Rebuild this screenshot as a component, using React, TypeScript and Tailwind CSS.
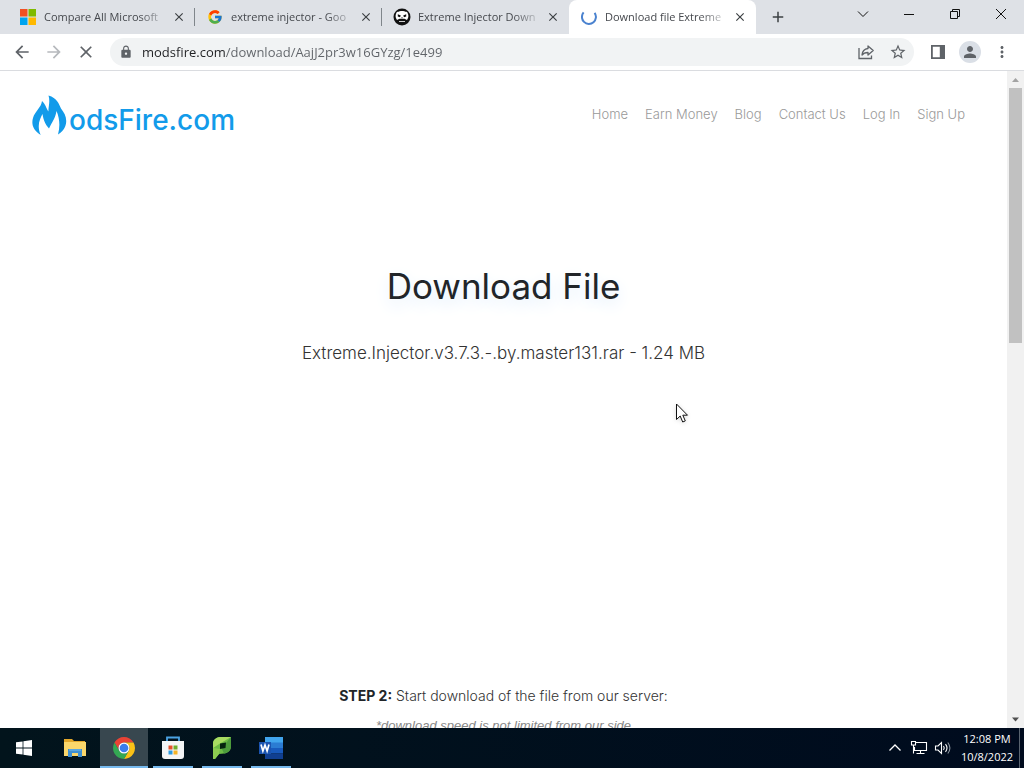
import type { ReactNode } from "react"
import { FcGoogle } from "react-icons/fc"
import {
  MdAdd,
  MdArrowBack,
  MdArrowForward,
  MdClose,
  MdLock,
  MdMoreVert,
  MdPerson,
  MdStarBorder,
} from "react-icons/md"

const navLinks = ["Home", "Earn Money", "Blog", "Contact Us", "Log In", "Sign Up"]

function MicrosoftIcon() {
  return (
    <svg viewBox="0 0 16 16" className="size-4">
      <path fill="#f25022" d="M0 0h7.5v7.5H0z" />
      <path fill="#7fba00" d="M8.5 0H16v7.5H8.5z" />
      <path fill="#00a4ef" d="M0 8.5h7.5V16H0z" />
      <path fill="#ffb900" d="M8.5 8.5H16V16H8.5z" />
    </svg>
  )
}

function PandaIcon() {
  return (
    <svg viewBox="0 0 18 18" className="size-[18px] shrink-0">
      <circle cx="9" cy="9" r="8.5" fill="#111" />
      <path
        fill="#fff"
        d="M2.8 6.500C3.500 4.500 4 3 5 4c2-1.300 6-1.300 8 0 1-1 1.500.5 2.200 2.500.6 2-.2 4-1.200 5.500l-2.500-1.200H6.500L4 12C3 10.500 2.200 8.500 2.800 6.500z"
      />
      <path fill="#111" d="M4.800 6.200l3 1.200-.8 1.800-2.200-.6zM13.200 6.200l-3 1.200.8 1.800 2.200-.6zM8 9.500h2l-1 1z" />
      <path stroke="#fff" strokeWidth=".8" d="M6 13.500h6" />
    </svg>
  )
}

function SpinnerIcon() {
  return (
    <svg viewBox="0 0 16 16" className="size-4" fill="none" stroke="#4a82cf" strokeWidth="2">
      <path d="M2.600 3.400A7 7 0 1 0 13.600 3.800" />
    </svg>
  )
}

function ShareIcon() {
  return (
    <svg viewBox="0 0 18 18" className="size-[18px]" fill="none" stroke="#5f6368" strokeWidth="1.300">
      <path d="M2 5v10.500h12.500v-3" />
      <path strokeLinejoin="round" d="M11 3l5.200 4.500L11 12V9.500c-2.800 0-4.600.7-6 2.600.3-3.600 2.400-6.200 6-6.600z" />
    </svg>
  )
}

function SidePanelIcon() {
  return (
    <svg viewBox="0 0 16 16" className="size-4">
      <path fill="#5f6368" fillRule="evenodd" d="M1 1h14v14H1zM2.800 2.800v10.400h7V2.800z" />
    </svg>
  )
}

function FlameMark() {
  return (
    <svg viewBox="0 0 36 42" className="h-[42px] w-9">
      <path
        fill="#129bea"
        d="M8.700 40C1 35-.8 29 1 23 3 16 9 13 10 6c3.500 3 4 7 6.500 10.500C16 12 18.500 7 16.500.500 25 3 27 9 29 13.500c3.500 4.500 6 9 5 15-.8 5-4 8.500-8 11 2.200-8 1.700-16-1.500-23.500-1 7-4.500 11-7.500 17.500C13 29 11.500 25 10.500 19 8 24 4.500 30 8.700 40z"
      />
    </svg>
  )
}

function WindowsIcon() {
  return (
    <svg viewBox="0 0 16 16" className="size-4" fill="#fff">
      <path d="M0 2.300l6.600-.9v6.200H0zM7.400 1.300L16 0v7.600H7.400zM0 8.400h6.600v6.200L0 13.700zM7.400 8.400H16V16l-8.600-1.300z" />
    </svg>
  )
}

function ExplorerIcon() {
  return (
    <svg viewBox="0 0 22 20" className="h-5 w-[22px]">
      <path fill="#e3a82b" d="M0 1h8l2 2h11v4H0z" />
      <path fill="#fbd76b" d="M0 4h22v14H0z" />
      <path fill="#3f8fd0" d="M4 11h14v8h-4v-4H8v4H4z" />
      <path fill="#5aa6de" d="M5 11h12v2H5z" />
    </svg>
  )
}

function ChromeIcon() {
  return (
    <svg viewBox="2 2 44 44" className="size-[22px]">
      <path fill="#ea4335" d="M24 13h19.050A22 22 0 0 0 4.950 13l9.520 16.500A11 11 0 0 1 24 13z" />
      <path fill="#fbc116" d="M33.530 29.500L24 46A22 22 0 0 0 43.050 13H24a11 11 0 0 1 9.530 16.500z" />
      <path fill="#34a853" d="M14.470 29.500L4.950 13A22 22 0 0 0 24 46l9.530-16.500a11 11 0 0 1-19.060 0z" />
      <circle cx="24" cy="24" r="11" fill="#fff" />
      <circle cx="24" cy="24" r="8.700" fill="#3b7ded" />
    </svg>
  )
}

function StoreIcon() {
  return (
    <svg viewBox="0 0 24 24" className="size-6">
      <path fill="none" stroke="#4ba3e3" strokeWidth="1.800" d="M6 6V1.500h12V6" />
      <path fill="#f4f5f6" d="M1 5h22v15a3 3 0 0 1-3 3H4a3 3 0 0 1-3-3z" />
      <path fill="#e6502c" d="M7.500 9.500h4v4h-4z" />
      <path fill="#6fae2e" d="M12.500 9.500h4v4h-4z" />
      <path fill="#2c9be0" d="M7.500 14.500h4v4h-4z" />
      <path fill="#f5b326" d="M12.500 14.500h4v4h-4z" />
    </svg>
  )
}

function LeafIcon() {
  return (
    <svg viewBox="0 0 20 24" className="h-6 w-5">
      <path fill="#6dbb45" d="M1 8c0-4 2.500-6.500 7-7h11v9c0 4.500-3 7-7 7.500L7 18l-4 5H1z" />
      <path fill="#a9dc62" d="M1 8c0-4 2.500-6.500 7-7h11L8 7.500 1 12z" />
      <path fill="#4d9c3c" d="M19 1v9c0 4.500-3 7-7 7.500L10 13l4-6z" />
      <path fill="#8ccb50" d="M1 12l7 1-1 5-4 5H1z" />
      <path fill="#06240f" d="M8 7.500l6-1-.5 5.500L8 13z" />
    </svg>
  )
}

function WordIcon() {
  return (
    <svg viewBox="0 0 24 22" className="h-[22px] w-6">
      <path fill="#41a5ee" d="M6 0h18v6H6z" />
      <path fill="#2b7cd3" d="M6 5.500h18V11H6z" />
      <path fill="#185abd" d="M6 11h18v5.500H6z" />
      <path fill="#103f91" d="M6 16.500h18V22H6z" />
      <path fill="#1b54b0" d="M0 5h12v12H0z" />
      <path fill="none" stroke="#fff" strokeWidth="1.700" d="M2 7.500l1.900 6.500L6 8l2.100 6L10 7.500" />
    </svg>
  )
}

function Tab({ icon, title, active, divider }: { icon: ReactNode; title: string; active?: boolean; divider?: boolean }) {
  return (
    <div
      className={
        "relative flex h-full min-w-0 flex-[0_1_187px] items-center gap-2 pr-2 pl-3 " +
        (active ? "rounded-t-lg bg-white" : "")
      }
    >
      <button className="flex min-w-0 flex-1 items-center gap-2 text-left">
        <span className="flex w-4 shrink-0 justify-center">{icon}</span>
        <span className="flex-1 text-[11px] leading-4 whitespace-nowrap text-[#45484d] [mask-image:linear-gradient(90deg,#000_80%,#0003)]">
          {title}
        </span>
      </button>
      <button aria-label={"Close " + title} className="flex size-4 shrink-0 items-center justify-center text-[#3c4043]">
        <MdClose className="size-[14px]" />
      </button>
      {divider && <span className="absolute top-2 right-0 h-[18px] w-px bg-[#80868b]" />}
    </div>
  )
}

function ToolButton({ label, children }: { label: string; children: ReactNode }) {
  return (
    <button aria-label={label} className="flex h-7 w-8 shrink-0 items-center justify-center text-[#5f6368]">
      {children}
    </button>
  )
}

function WindowButton({ label, d }: { label: string; d: string }) {
  return (
    <button aria-label={label} className="flex h-7 w-[46px] items-center justify-center">
      <svg viewBox="0 0 12 12" className="size-3" fill="none" stroke="#111" strokeWidth="1">
        <path d={d} />
      </svg>
    </button>
  )
}

function TaskButton({ label, running, active, children }: { label: string; running?: boolean; active?: boolean; children: ReactNode }) {
  return (
    <button
      aria-label={label}
      className={"relative flex h-10 w-12 items-center justify-center " + (active ? "bg-[#38474f]" : "")}
    >
      {children}
      {running && <span className={"absolute bottom-0 h-0.5 bg-[#76b9ed] " + (active ? "inset-x-0" : "inset-x-1")} />}
    </button>
  )
}

function Browser() {
  return (
    <header className="shrink-0 font-['Open_Sans',sans-serif]">
      <div className="flex h-[34px] justify-between bg-[#dee1e6]">
        <div className="flex min-w-0 flex-1 items-center pl-2">
          <Tab icon={<MicrosoftIcon />} title="Compare All Microsoft" divider />
          <Tab icon={<FcGoogle className="size-4 shrink-0" />} title="extreme injector - Goo" divider />
          <Tab icon={<PandaIcon />} title="Extreme Injector Down" />
          <Tab icon={<SpinnerIcon />} title="Download file Extreme" active />
          <button aria-label="New tab" className="ml-3 flex size-5 items-center justify-center text-[#3c4043]">
            <MdAdd className="size-[18px]" />
          </button>
        </div>
        <div className="flex">
          <WindowButton label="Search tabs" d="M1 3.500l5 5 5-5" />
          <WindowButton label="Minimize" d="M1 6.500h10" />
          <WindowButton label="Restore" d="M1.500 3.500h7v7h-7zM3.500 3.500v-2h7v7h-2" />
          <WindowButton label="Close" d="M1 1l10 10M11 1L1 11" />
        </div>
      </div>

      <div className="flex h-[37px] items-center gap-2 border-b border-[#dadce0] bg-white px-1.5">
        <div className="flex">
          <ToolButton label="Back"><MdArrowBack className="size-5" /></ToolButton>
          <ToolButton label="Forward"><MdArrowForward className="size-5 text-[#b6b9bd]" /></ToolButton>
          <ToolButton label="Stop"><MdClose className="size-5" /></ToolButton>
        </div>
        <div className="flex h-7 flex-1 items-center rounded-full bg-[#f1f3f4]">
          <ToolButton label="Site information"><MdLock className="size-[14px]" /></ToolButton>
          <input
            aria-label="Address"
            defaultValue="modsfire.com/download/AajJ2pr3w16GYzg/1e499"
            className="min-w-0 flex-1 bg-[linear-gradient(90deg,#202124_84px,#5f6368_84px)] bg-clip-text text-[13px] leading-5 text-transparent outline-none"
          />
          <ToolButton label="Share"><ShareIcon /></ToolButton>
          <ToolButton label="Bookmark"><MdStarBorder className="size-[18px]" /></ToolButton>
        </div>
        <div className="flex">
          <ToolButton label="Side panel"><SidePanelIcon /></ToolButton>
          <ToolButton label="Profile">
            <span className="flex size-[22px] items-center justify-center rounded-full bg-[#dadfe6]">
              <MdPerson className="size-[18px]" />
            </span>
          </ToolButton>
          <ToolButton label="Menu"><MdMoreVert className="size-[18px]" /></ToolButton>
        </div>
      </div>
    </header>
  )
}

function Page() {
  return (
    <main className="min-w-0 flex-1 overflow-hidden bg-white font-['Inter',sans-serif]">
      <div className="flex items-start justify-between py-6 pr-[42px] pl-8">
        <a href="#" className="flex items-end gap-px">
          <FlameMark />
          <span className="text-[28px] leading-[34px] font-medium text-[#129bea]">odsFire.com</span>
        </a>
        <nav className="flex gap-[17px] pt-[9px] text-[13px] leading-5 font-light text-[#999]">
          {navLinks.map((link) => (
            <a key={link} href="#">{link}</a>
          ))}
        </nav>
      </div>

      <div className="flex flex-col items-center pt-[101px] text-center">
        <h1 className="text-[35px] leading-[48px] text-[#212529] [text-shadow:0_6px_16px_#dcebfa]">Download File</h1>
        <p className="pt-[29px] text-[17px] leading-7 font-light text-[#333]">
          Extreme.Injector.v3.7.3.-.by.master131.rar - 1.24 MB
        </p>
        <div className="h-[319px]" />
        <p className="text-[14px] leading-5 font-light text-[#333]">
          <strong className="font-bold text-[#212529]">STEP 2:</strong> Start download of the file from our server:
        </p>
        <p className="pt-[10px] font-['Liberation_Sans',sans-serif] text-[13px] leading-5 text-[#888] italic">
          *download speed is not limited from our side
        </p>
      </div>
    </main>
  )
}

function Scrollbar() {
  return (
    <div className="flex w-[17px] shrink-0 flex-col items-center bg-[#f1f1f1]">
      <svg viewBox="0 0 17 17" className="size-[17px]"><path fill="#a3a3a3" d="M5 11l3.500-4 3.500 4z" /></svg>
      <div className="w-[13px] flex-1">
        <div className="h-[41%] bg-[#c1c1c1]" />
      </div>
      <svg viewBox="0 0 17 17" className="size-[17px]"><path fill="#505050" d="M5 6.500l3.500 4 3.500-4z" /></svg>
    </div>
  )
}

function Taskbar() {
  return (
    <footer className="flex h-10 shrink-0 items-center justify-between bg-linear-to-r from-[#02141c] to-[#000b1e] font-['Open_Sans',sans-serif] text-white">
      <div className="flex gap-px">
        <TaskButton label="Start"><WindowsIcon /></TaskButton>
        <div className="w-px" />
        <TaskButton label="File Explorer"><ExplorerIcon /></TaskButton>
        <TaskButton label="Chrome" running active><ChromeIcon /></TaskButton>
        <TaskButton label="Microsoft Store" running><StoreIcon /></TaskButton>
        <TaskButton label="PaperCut" running><LeafIcon /></TaskButton>
        <TaskButton label="Word" running><WordIcon /></TaskButton>
      </div>
      <div className="flex h-full items-center">
        <button aria-label="Show hidden icons" className="flex w-6 justify-center">
          <svg viewBox="0 0 14 14" className="size-[14px]" fill="none" stroke="#fff" strokeWidth="1.300">
            <path d="M1.500 9.500L7 4l5.500 5.500" />
          </svg>
        </button>
        <button aria-label="Network" className="flex w-6 justify-center">
          <svg viewBox="0 0 18 16" className="h-4 w-[18px]" fill="none" stroke="#fff" strokeWidth="1.100">
            <path d="M6 2.500h10.500v8H4.500V7M10.500 10.500v3M6.500 13.500h8" />
            <path d="M1.500 1.500h4v3.500h-4zM3.500 5v8.500" />
          </svg>
        </button>
        <button aria-label="Volume" className="flex w-6 justify-center">
          <svg viewBox="0 0 18 16" className="h-4 w-[18px]" fill="none" stroke="#fff" strokeWidth="1.100">
            <path d="M1.500 6h2.500l3.500-3.500v11L4 10H1.500z" />
            <path d="M9.500 6q1.500 2 0 4M11.500 4.200q3 3.800 0 7.600" />
            <path stroke="#8b95a0" d="M13.800 2.500q4.200 5.500 0 11" />
          </svg>
        </button>
        <button className="w-16 text-center text-[11px] leading-[18px]">
          <span className="block">12:08 PM</span>
          <span className="block">10/8/2022</span>
        </button>
        <button aria-label="Show desktop" className="h-full w-[5px] border-l border-[#5a6470]" />
      </div>
    </footer>
  )
}

export default function App() {
  return (
    <div className="relative flex h-screen flex-col overflow-hidden">
      <Browser />
      <div className="flex min-h-0 flex-1">
        <Page />
        <Scrollbar />
      </div>
      <Taskbar />
      <svg viewBox="0 0 14 21" className="absolute top-[403px] left-[676px] h-[21px] w-[14px] drop-shadow-sm">
        <path fill="#fff" stroke="#111" d="M.500 1v15.500l3.700-3.500 2.500 6 2.600-1.100-2.500-5.700h4.700z" />
      </svg>
    </div>
  )
}
